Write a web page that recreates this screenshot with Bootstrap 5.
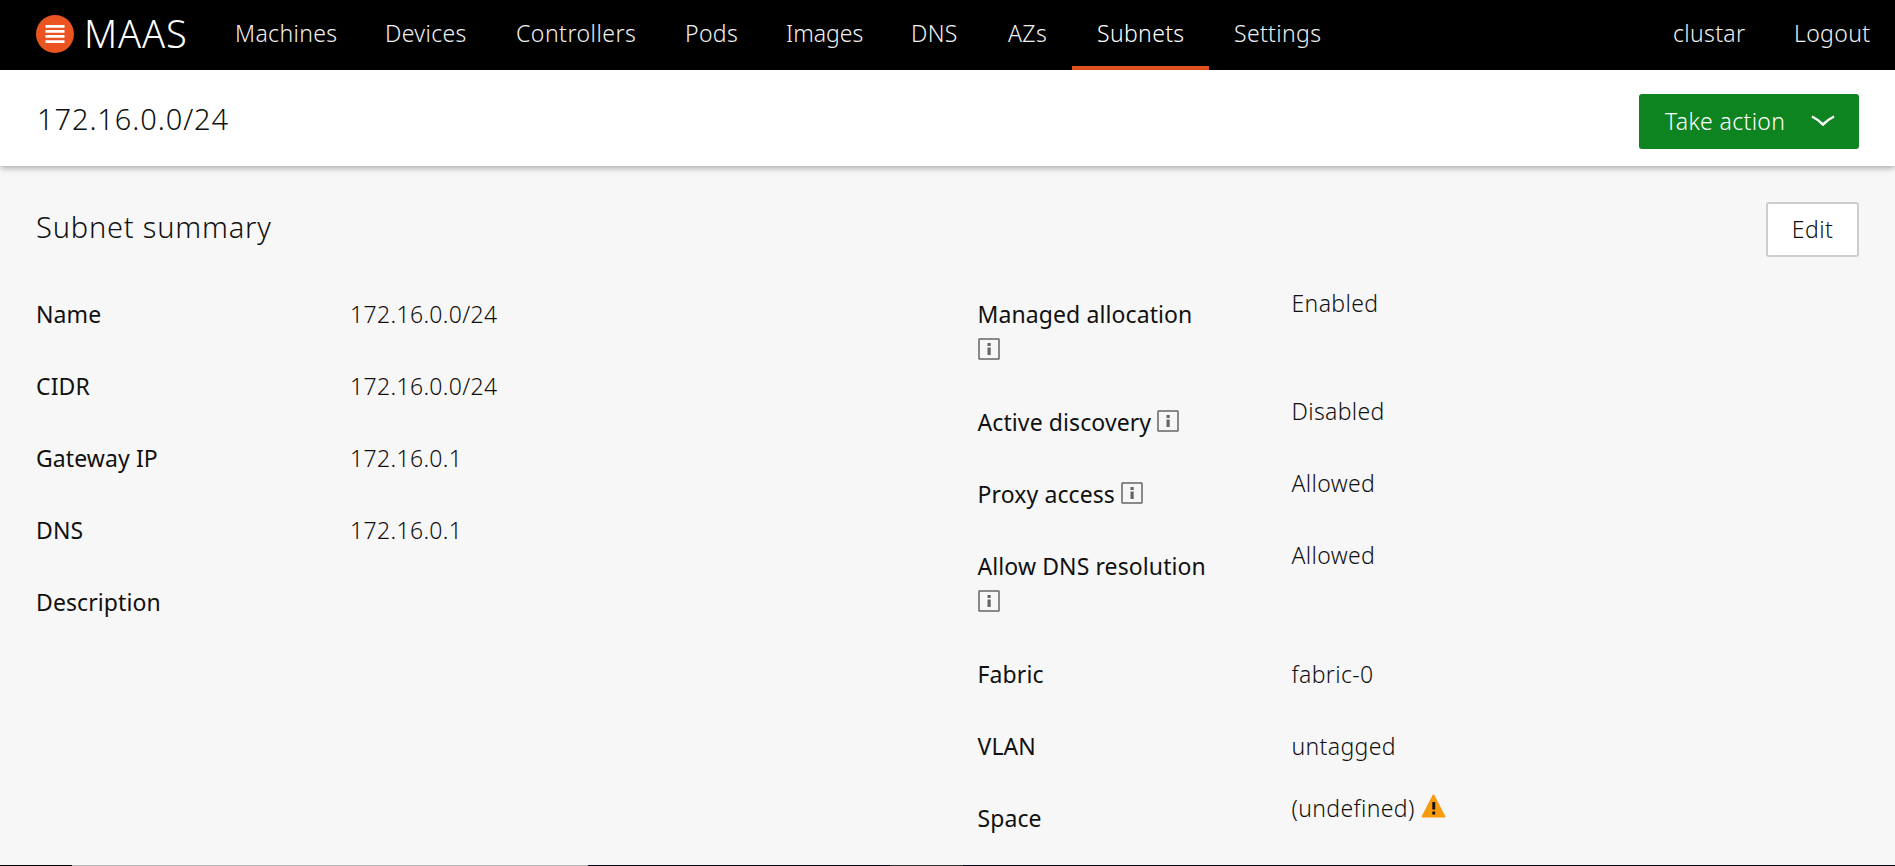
<!DOCTYPE html>
<html lang="en">
<head>
<meta charset="utf-8">
<meta name="viewport" content="width=device-width, initial-scale=1">
<title>172.16.0.0/24 | MAAS</title>
<link rel="stylesheet" href="https://cdn.jsdelivr.net/npm/bootstrap@5.3.0/dist/css/bootstrap.min.css">
<style>
  body { font-family: "Noto Sans", sans-serif; font-weight: 300; font-size: 23px; line-height: 36px; letter-spacing: .35px; color: #111; background: #f7f7f7; height: 100vh; overflow: hidden; }
  .topbar { height: 70px; background: #000; padding: 0; letter-spacing: .35px; }
  .topbar .navbar-brand { width: 210px; padding: 0 0 2px 36px; margin: 0; gap: 10px; letter-spacing: .9px; }
  .brand-name { font-family: "Noto Sans", sans-serif; font-size: 38px; line-height: 38px; color: #fff; padding-bottom: 2px; }
  .topbar .navbar-nav .nav-link { height: 70px; padding: 15px 0 0 25px; color: #f0f0f0; white-space: nowrap; font-weight: 300; }
  .topbar .navbar-nav .nav-link.active { color: #fff; border-bottom: 4px solid #e95420; }
  .w-machines { width: 150px; } .w-devices { width: 131px; } .w-controllers { width: 169px; letter-spacing: .5px; }
  .w-pods { width: 101px; } .w-images { width: 125px; letter-spacing: 0; } .w-dns { width: 97px; }
  .w-azs { width: 89px; } .w-subnets { width: 137px; } .w-settings { width: 137px; }
  .w-user { width: 121px; } .w-logout { width: 126px; }
  .page-head { position: relative; height: 96px; padding: 24px 36px 0; background: #fff; box-shadow: 0 2px 6px rgba(0,0,0,.32); }
  .page-title { font-size: 29px; line-height: 36px; font-weight: 300; letter-spacing: .8px; margin: 0; }
  .page-head .page-title { padding: 7px 0 0 1px; letter-spacing: .9px; }
  .btn-action, .btn-edit { height: 55px; font-size: 23px; font-weight: 300; line-height: 36px; border-radius: 3px; white-space: nowrap; }
  .btn-action, .btn-action:hover { width: 220px; padding: 0 23px 1px 25px; background: #0e8420; color: #fff; letter-spacing: .35px; }
  .btn-edit, .btn-edit:hover { width: 93px; padding: 0 0 2px; background: #fff; border: 2px solid #cdcdcd; color: #111; letter-spacing: .5px; }
  .summary { padding: 36px 36px 0; }
  .summary-head { height: 83px; }
  .summary-head .page-title { padding-top: 7px; }
  .summary-cols { --bs-gutter-x: 60px; }
  .facts { display: grid; grid-template-columns: 314px 1fr; margin: 0; }
  .facts dt { font-weight: 375; padding: 10.500px 76px 25.500px 0; letter-spacing: .1px; color: #111; }
  .facts dd { margin: 0; padding-top: 10.500px; }
  .facts dd.raised { padding-top: 0; }
  .facts dd.raised-sm { padding-top: 1px; }
  .icon-info { width: 22px; height: 22px; vertical-align: -1px; display: inline-block; }
  .icon-warn { width: 25px; height: 24px; vertical-align: -1px; display: inline-block; }
  .bottom-edge { height: 1px; background: linear-gradient(90deg, #000 72px, #b5b5b5 72px 588px, #060610 588px 890px, #333 890px 963px, #060610 963px); }
</style>
</head>
<body class="d-flex flex-column">
<nav class="navbar navbar-expand topbar align-items-stretch">
  <a class="navbar-brand d-flex align-items-center" href="#">
    <svg width="38" height="38" viewBox="0 0 38 38" aria-hidden="true"><circle cx="19" cy="19" r="19" fill="#e95420"/><path d="M9.500 11.300h19M9.500 16.300h19M9.500 21.400h19M9.500 26.600h19" stroke="#fff" stroke-width="2.800"/></svg>
    <span class="brand-name">MAAS</span>
  </a>
  <div class="navbar-nav">
    <a class="nav-link w-machines" href="#">Machines</a>
    <a class="nav-link w-devices" href="#">Devices</a>
    <a class="nav-link w-controllers" href="#">Controllers</a>
    <a class="nav-link w-pods" href="#">Pods</a>
    <a class="nav-link w-images" href="#">Images</a>
    <a class="nav-link w-dns" href="#">DNS</a>
    <a class="nav-link w-azs" href="#">AZs</a>
    <a class="nav-link w-subnets active" href="#">Subnets</a>
    <a class="nav-link w-settings" href="#">Settings</a>
  </div>
  <div class="navbar-nav ms-auto">
    <a class="nav-link w-user" href="#">clustar</a>
    <a class="nav-link w-logout" href="#">Logout</a>
  </div>
</nav>
<header class="page-head d-flex justify-content-between align-items-start">
  <h1 class="page-title">172.16.0.0/24</h1>
  <button class="btn btn-action d-flex align-items-center justify-content-between" type="button">Take action
    <svg width="24" height="12" viewBox="0 0 24 12" fill="none" aria-hidden="true"><path d="M1 1.500Q7 4.500 12 9.500Q17 4.500 23 1.500" stroke="#fff" stroke-width="2.500"/></svg>
  </button>
</header>
<main class="summary flex-grow-1">
  <div class="summary-head d-flex justify-content-between align-items-start">
    <h2 class="page-title">Subnet summary</h2>
    <button class="btn btn-edit" type="button">Edit</button>
  </div>
  <div class="row summary-cols">
    <div class="col-6">
      <dl class="facts">
        <dt>Name</dt><dd>172.16.0.0/24</dd>
        <dt>CIDR</dt><dd>172.16.0.0/24</dd>
        <dt>Gateway IP</dt><dd>172.16.0.1</dd>
        <dt>DNS</dt><dd>172.16.0.1</dd>
        <dt>Description</dt><dd></dd>
      </dl>
    </div>
    <div class="col-6">
      <dl class="facts">
        <dt>Managed allocation <svg class="icon-info" viewBox="0 0 22 22"><rect x="1" y="1" width="20" height="20" rx=".5" fill="none" stroke="#666" stroke-width="1.500"/><path d="M9.500 5h3.200v3h-3.200zM9.500 9.500h3.200v7.500h-3.200z" fill="#666"/></svg></dt><dd class="raised">Enabled</dd>
        <dt>Active discovery <svg class="icon-info" viewBox="0 0 22 22"><rect x="1" y="1" width="20" height="20" rx=".5" fill="none" stroke="#666" stroke-width="1.500"/><path d="M9.500 5h3.200v3h-3.200zM9.500 9.500h3.200v7.500h-3.200z" fill="#666"/></svg></dt><dd class="raised">Disabled</dd>
        <dt>Proxy access <svg class="icon-info" viewBox="0 0 22 22"><rect x="1" y="1" width="20" height="20" rx=".5" fill="none" stroke="#666" stroke-width="1.500"/><path d="M9.500 5h3.200v3h-3.200zM9.500 9.500h3.200v7.500h-3.200z" fill="#666"/></svg></dt><dd class="raised">Allowed</dd>
        <dt>Allow DNS resolution <svg class="icon-info" viewBox="0 0 22 22"><rect x="1" y="1" width="20" height="20" rx=".5" fill="none" stroke="#666" stroke-width="1.500"/><path d="M9.500 5h3.200v3h-3.200zM9.500 9.500h3.200v7.500h-3.200z" fill="#666"/></svg></dt><dd class="raised">Allowed</dd>
        <dt>Fabric</dt><dd>fabric-0</dd>
        <dt>VLAN</dt><dd>untagged</dd>
        <dt>Space</dt><dd class="raised-sm">(undefined) <svg class="icon-warn" viewBox="0 0 25 24"><path d="M11.500 1.200q1-1.400 2 0l10.800 21q.5 1.300-.8 1.300h-22q-1.300 0-.8-1.300z" fill="#f99b11"/><path d="M11.300 8h2.900v7.500h-2.900zM11.300 17.500h2.900v3h-2.900z" fill="#111"/></svg></dd>
      </dl>
    </div>
  </div>
</main>
<footer class="bottom-edge flex-shrink-0"></footer>
<script src="https://cdn.jsdelivr.net/npm/bootstrap@5.3.0/dist/js/bootstrap.bundle.min.js"></script>
</body>
</html>
